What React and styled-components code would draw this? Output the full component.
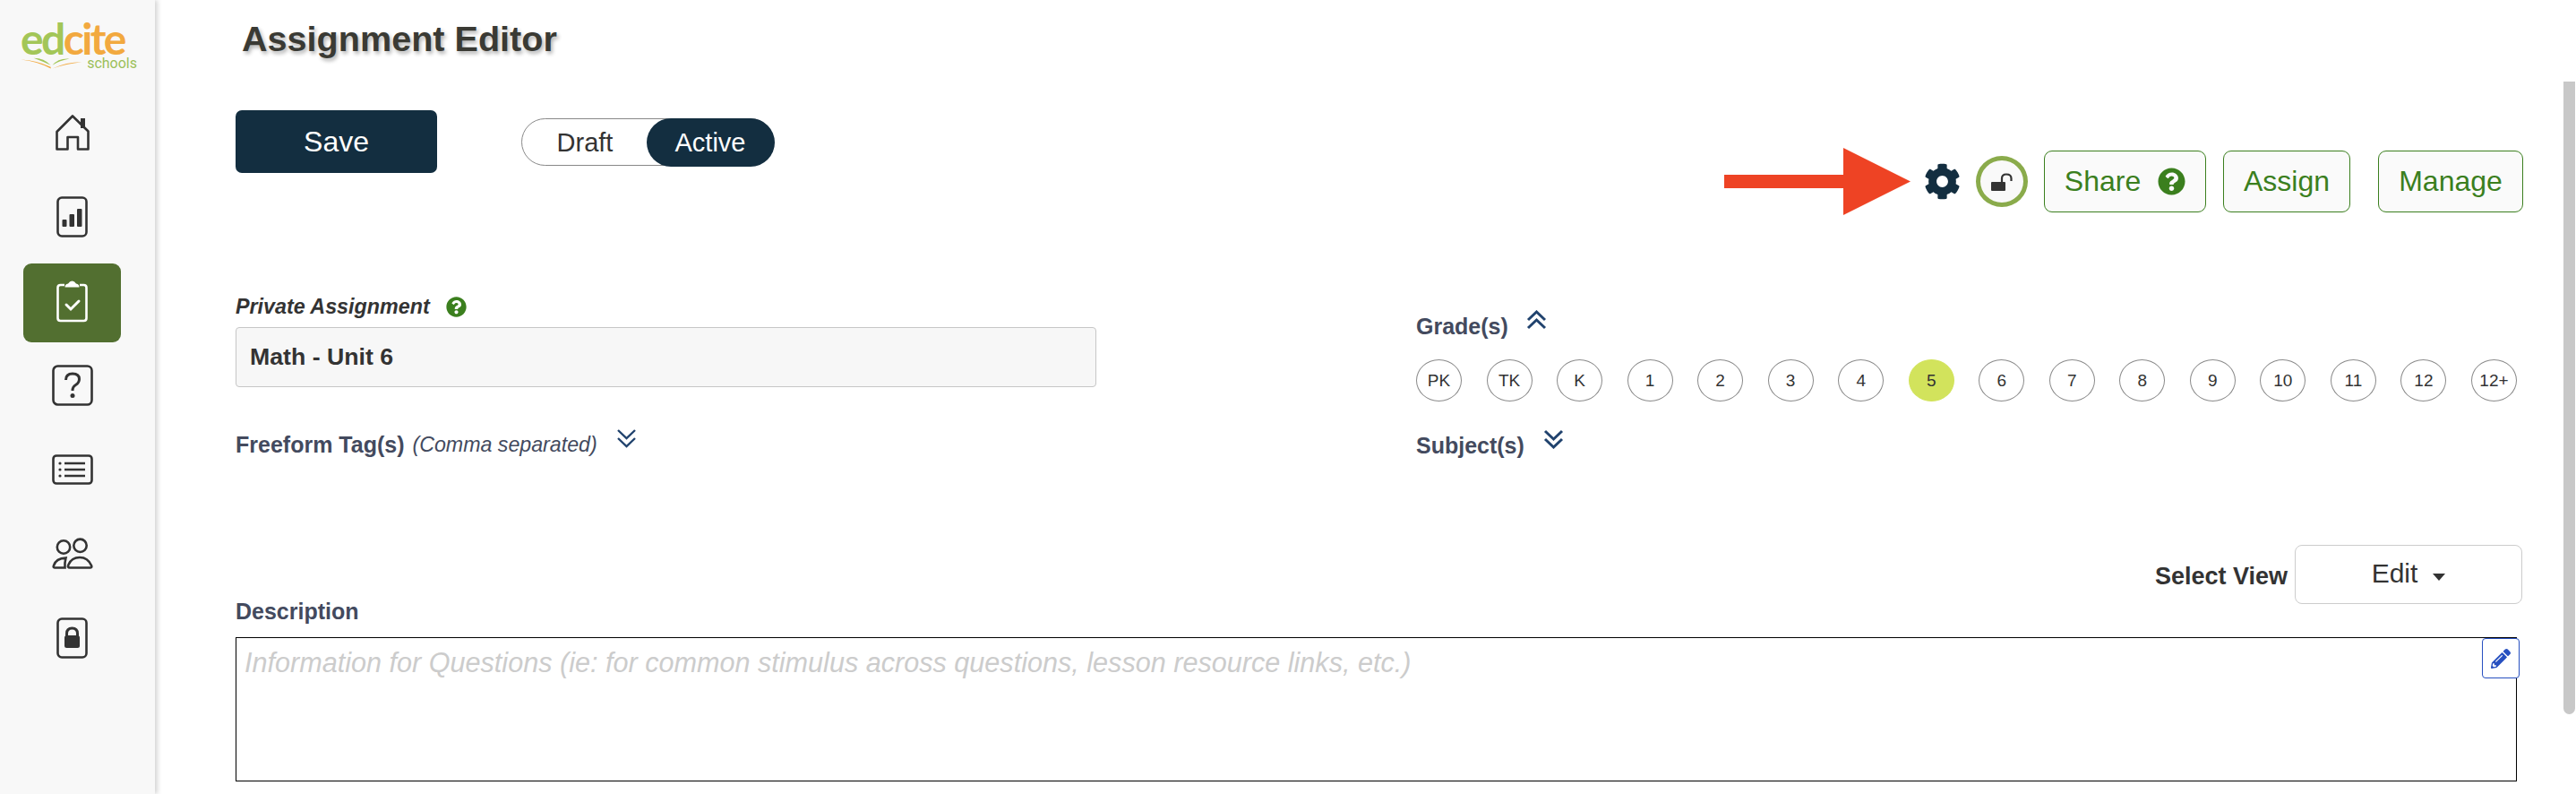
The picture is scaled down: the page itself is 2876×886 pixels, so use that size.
import React from "react";
import styled, { createGlobalStyle } from "styled-components";
import { FaCog, FaQuestionCircle, FaPencilAlt } from "react-icons/fa";

const GlobalStyle = createGlobalStyle`
  html, body {
    margin: 0;
    padding: 0;
    background: #fff;
    font-family: "Liberation Sans", Arial, sans-serif;
  }
`;

const Page = styled.div`
  display: flex;
  width: 2876px;
  height: 886px;
  overflow: hidden;
  background: #fff;
`;

const Sidebar = styled.aside`
  flex: 0 0 173px;
  background: #f8f8f8;
  box-shadow: 3px 0 5px rgba(0, 0, 0, 0.16);
  padding-top: 23px;
  padding-left: 23px;
  box-sizing: border-box;
`;

const Logo = styled.div`
  height: 83px;
  width: 130px;
`;

const LogoWord = styled.div`
  font-family: "Lato", sans-serif;
  font-size: 48px;
  line-height: 40px;
  height: 40px;
  letter-spacing: -2.6px;
  font-weight: 700;
  color: #f2a93f;
  span {
    color: #a3c658;
  }
`;

const LogoFoot = styled.div`
  display: flex;
  align-items: center;
  gap: 5px;
`;

const LogoSchools = styled.span`
  font-family: "Roboto", sans-serif;
  font-size: 16px;
  line-height: 16px;
  color: #9cc05a;
`;

const Nav = styled.nav`
  display: flex;
  flex-direction: column;
  gap: 6px;
  width: 109px;
  margin-left: 3px;
`;

const NavItem = styled.div`
  height: 88px;
  display: flex;
  justify-content: center;
  align-items: center;
  padding-bottom: 4px;
  box-sizing: border-box;
  border-radius: 9px;
  background: ${(p) => (p.$active ? "#526f30" : "transparent")};
  color: ${(p) => (p.$active ? "#fff" : "#333")};
`;

const Main = styled.main`
  flex: 1;
  padding: 20px 45px 0 90px;
  box-sizing: border-box;
`;

const Title = styled.h1`
  margin: 0 0 57px 7px;
  font-size: 39.6px;
  line-height: 46px;
  font-weight: 700;
  color: #3a3a34;
  text-shadow: 2px 3px 4px rgba(0, 0, 0, 0.3);
`;

const Toolbar = styled.div`
  display: flex;
  justify-content: space-between;
  align-items: flex-start;
  height: 114px;
`;

const ToolLeft = styled.div`
  display: flex;
  align-items: flex-start;
  gap: 94px;
`;

const SaveButton = styled.button`
  width: 225px;
  height: 70px;
  border: 0;
  border-radius: 7px;
  background: #132e40;
  color: #fff;
  font: 32px "Liberation Sans", Arial, sans-serif;
`;

const Toggle = styled.div`
  display: flex;
  width: 282px;
  height: 53px;
  margin-top: 9px;
  border: 1.5px solid #888;
  border-radius: 27px;
  box-sizing: border-box;
  font-size: 29px;
`;

const ToggleOption = styled.div`
  flex: 1;
  display: flex;
  justify-content: center;
  align-items: center;
  padding-top: 2px;
  box-sizing: border-box;
  border-radius: 27px;
  margin: -1.5px;
  background: ${(p) => (p.$on ? "#132e40" : "transparent")};
  color: ${(p) => (p.$on ? "#fff" : "#333")};
`;

const ToolRight = styled.div`
  display: flex;
  align-items: center;
  height: 69px;
  margin-top: 45px;
`;

const Arrow = styled.svg`
  width: 208px;
  height: 75px;
  margin-right: 15px;
`;

const Gear = styled(FaCog)`
  width: 41px;
  height: 41px;
  color: #132e40;
  margin-right: 17px;
`;

const LockRing = styled.div`
  width: 58px;
  height: 57px;
  margin-right: 18px;
  border: 5px solid #8aab4b;
  border-radius: 50%;
  box-sizing: border-box;
  background: #f9f9f9;
  display: flex;
  justify-content: center;
  align-items: center;
`;

const ActionButton = styled.div`
  display: flex;
  justify-content: center;
  align-items: center;
  gap: 19px;
  width: ${(p) => p.$w}px;
  height: 69px;
  margin-left: ${(p) => p.$ml || 0}px;
  border: 1.5px solid #3b7f1e;
  border-radius: 9px;
  box-sizing: border-box;
  background: #fafafa;
  color: #3b7f1e;
  font-size: 32px;
`;

const HelpIcon = styled(FaQuestionCircle)`
  width: ${(p) => p.$size}px;
  height: ${(p) => p.$size}px;
  color: #3b7f1e;
`;

const Fields = styled.div`
  display: grid;
  grid-template-columns: 1318px 1229px;
`;

const LeftCol = styled.div`
  padding-top: 91px;
`;

const RightCol = styled.div`
  padding-top: 112px;
`;

const PrivateRow = styled.div`
  display: flex;
  align-items: center;
  gap: 18px;
  margin-bottom: 9px;
`;

const PrivateLabel = styled.label`
  font-size: 23.3px;
  line-height: 28px;
  font-weight: 700;
  font-style: italic;
  color: #333;
`;

const NameInput = styled.div`
  width: 961px;
  height: 67px;
  padding-left: 15px;
  display: flex;
  align-items: center;
  box-sizing: border-box;
  background: #f7f7f7;
  border: 1.5px solid #c6c6c6;
  border-radius: 4px;
  font-size: 26.7px;
  font-weight: 700;
  color: #333;
`;

const FieldLabel = styled.div`
  display: flex;
  align-items: flex-start;
  font-size: 25px;
  line-height: 30px;
  font-weight: 700;
  color: #434a5e;
  margin-top: ${(p) => p.$mt || 0}px;
  em {
    font-weight: 400;
    font-size: 23.2px;
    margin-left: 9px;
  }
`;

const Chevrons = styled.svg`
  width: 23px;
  height: 22px;
  margin-left: ${(p) => p.$ml}px;
  margin-top: -3px;
  color: #21436e;
`;

const GradeRow = styled.div`
  display: flex;
  justify-content: space-between;
  margin-top: 22px;
`;

const Grade = styled.div`
  width: 51px;
  height: 47px;
  display: flex;
  justify-content: center;
  align-items: center;
  box-sizing: border-box;
  border-radius: 50%;
  border: 1.5px solid ${(p) => (p.$on ? "#d2e35c" : "#8a8a8a")};
  background: ${(p) => (p.$on ? "#d2e35c" : "#fff")};
  font-size: 19px;
  color: #333;
`;

const DescriptionRow = styled.div`
  display: flex;
  justify-content: space-between;
  align-items: flex-start;
  height: 89px;
  margin-top: 96px;
  margin-bottom: 14px;
`;

const ViewPicker = styled.div`
  display: flex;
  align-items: flex-start;
  gap: 8px;
  margin-right: 1px;
`;

const ViewLabel = styled.span`
  font-size: 27px;
  line-height: 32px;
  margin-top: 19px;
  font-weight: 700;
  color: #333;
`;

const ViewSelect = styled.div`
  width: 254px;
  height: 66px;
  display: flex;
  justify-content: center;
  align-items: center;
  gap: 17px;
  padding-bottom: 2px;
  box-sizing: border-box;
  border: 1.5px solid #ccc;
  border-radius: 8px;
  font-size: 30px;
  color: #333;
`;

const Caret = styled.i`
  display: block;
  margin-top: 8px;
  border-left: 7px solid transparent;
  border-right: 7px solid transparent;
  border-top: 8px solid #333;
`;

const DescriptionBox = styled.div`
  position: relative;
  width: 2547px;
  height: 161px;
  padding: 8px 9px;
  box-sizing: border-box;
  border: 1.5px solid #000;
  font-size: 30.6px;
  line-height: 38px;
  font-style: italic;
  color: #ccc;
`;

const PencilButton = styled.div`
  position: absolute;
  top: 0;
  right: -4px;
  width: 42px;
  height: 45px;
  display: flex;
  justify-content: center;
  align-items: center;
  box-sizing: border-box;
  background: #fff;
  border: 1.5px solid #2750c0;
  border-radius: 4px;
  color: #2750c0;
`;

const ScrollTrack = styled.div`
  flex: 0 0 14px;
`;

const ScrollThumb = styled.div`
  width: 13px;
  height: 706px;
  margin-top: 91px;
  background: #c8c8c8;
  border-radius: 0 0 7px 7px;
`;

const DoubleChevron = ({ up, ml, w = 3 }) => (
  <Chevrons $ml={ml} viewBox="0 0 23 22" fill="none" stroke="currentColor" strokeWidth={w}>
    {up ? (
      <>
        <path d="M2 11 L11.5 2 L21 11" />
        <path d="M2 20 L11.5 11 L21 20" />
      </>
    ) : (
      <>
        <path d="M2 2 L11.5 11 L21 2" />
        <path d="M2 11 L11.5 20 L21 11" />
      </>
    )}
  </Chevrons>
);

const HomeIcon = () => (
  <svg width="40" height="42" viewBox="0 0 40 42" fill="none" stroke="currentColor" strokeWidth="2.6" strokeLinejoin="round">
    <path d="M2.5 20 L20 2.5 L37.5 19.5 V39.5 H26 V26 H14.5 V39.5 H2.5 Z" />
    <rect x="29" y="5" width="5" height="11" fill="currentColor" stroke="none" />
  </svg>
);

const BarsIcon = () => (
  <svg width="35" height="46" viewBox="0 0 35 46" fill="none" stroke="currentColor" strokeWidth="2.6">
    <rect x="1.5" y="1.5" width="32" height="43" rx="4.5" />
    <rect x="6.5" y="26" width="5" height="8" rx="1" fill="currentColor" stroke="none" />
    <rect x="14.5" y="20" width="5.5" height="14" rx="1" fill="currentColor" stroke="none" />
    <rect x="23" y="14" width="5.5" height="20" rx="1" fill="currentColor" stroke="none" />
  </svg>
);

const ClipboardIcon = () => (
  <svg width="35" height="47" viewBox="0 0 35 47" fill="none" stroke="currentColor" strokeWidth="2.6">
    <path d="M9 5 H4.5 Q1.5 5 1.5 8 V42 Q1.5 45 4.5 45 H30.5 Q33.5 45 33.5 42 V8 Q33.5 5 30.5 5 H26" />
    <path d="M9.5 7.5 Q9.5 4 13 3.5 Q15 0.5 17.5 0.5 Q20 0.5 22 3.5 Q25.5 4 25.5 7.5 Z" fill="currentColor" stroke="none" />
    <path d="M11 27 L16 32 L25 23" strokeWidth="3" strokeLinecap="round" />
  </svg>
);

const QuestionIcon = () => (
  <svg width="46" height="46" viewBox="0 0 46 46" fill="none" stroke="currentColor" strokeWidth="2.6">
    <rect x="1.5" y="1.5" width="43" height="43" rx="5" />
    <path d="M15.5 17 Q15.5 10 23 10 Q30.5 10 30.5 16 Q30.5 20 26.5 22.5 Q23 24.5 23 29" strokeWidth="3" />
    <circle cx="23" cy="34.5" r="2.5" fill="currentColor" stroke="none" />
  </svg>
);

const ListIcon = () => (
  <svg width="46" height="34" viewBox="0 0 46 34" fill="none" stroke="currentColor" strokeWidth="2.6">
    <rect x="1.5" y="1.5" width="43" height="31" rx="3.5" />
    <path d="M14 10 H37 M14 17 H37 M14 24 H37" />
    <circle cx="9" cy="10" r="1.6" fill="currentColor" stroke="none" />
    <circle cx="9" cy="17" r="1.6" fill="currentColor" stroke="none" />
    <circle cx="9" cy="24" r="1.6" fill="currentColor" stroke="none" />
  </svg>
);

const PeopleIcon = () => (
  <svg width="46" height="36" viewBox="0 0 46 36" fill="none" stroke="currentColor" strokeWidth="2.6">
    <circle cx="13" cy="10.5" r="7.2" />
    <circle cx="31.5" cy="8.8" r="7.2" />
    <path d="M14.5 33.5 H3 Q1 33.5 2 31 Q4.5 23 15.5 22.5 Q14 28 14.5 33.5 Z" />
    <path d="M20 33.5 Q17 33.5 18.5 30 Q22 22 31 22 Q40 22 44 31 Q45 33.5 43 33.5 Z" />
  </svg>
);

const LockIcon = () => (
  <svg width="35" height="46" viewBox="0 0 35 46" fill="none" stroke="currentColor" strokeWidth="2.6">
    <rect x="1.5" y="1.5" width="32" height="43" rx="4.5" />
    <path d="M11.5 22 V18 Q11.5 12 17.5 12 Q23.5 12 23.5 18 V22" strokeWidth="3" />
    <rect x="9" y="20" width="17" height="14" rx="2.5" fill="currentColor" stroke="none" />
  </svg>
);

const grades = ["PK", "TK", "K", "1", "2", "3", "4", "5", "6", "7", "8", "9", "10", "11", "12", "12+"];

const navIcons = [HomeIcon, BarsIcon, ClipboardIcon, QuestionIcon, ListIcon, PeopleIcon, LockIcon];

const App = () => {
  return (
    <Page>
      <GlobalStyle />
      <Sidebar>
        <Logo>
          <LogoWord>
            <span>ed</span>cite
          </LogoWord>
          <LogoFoot>
            <svg width="76" height="14" viewBox="0 0 76 14">
              <path d="M0 2 Q20 4 37 13 L37 11 Q20 3 0 2 Z" fill="#f2a93f" />
              <path d="M39 13 Q56 5 75 5 Q56 7 39 13 Z" fill="#f2a93f" />
              <path d="M16 0 Q29 0 37 9 Q27 4 16 0 Z" fill="#a3c658" />
              <path d="M39 9 Q46 0 60 1 Q48 3 39 9 Z" fill="#a3c658" />
            </svg>
            <LogoSchools>schools</LogoSchools>
          </LogoFoot>
        </Logo>
        <Nav>
          {navIcons.map((Icon, i) => (
            <NavItem key={i} $active={i === 2}>
              <Icon />
            </NavItem>
          ))}
        </Nav>
      </Sidebar>
      <Main>
        <Title>Assignment Editor</Title>
        <Toolbar>
          <ToolLeft>
            <SaveButton>Save</SaveButton>
            <Toggle>
              <ToggleOption>Draft</ToggleOption>
              <ToggleOption $on>Active</ToggleOption>
            </Toggle>
          </ToolLeft>
          <ToolRight>
            <Arrow viewBox="0 0 208 75">
              <path d="M0 30 H133 V0 L208 37.5 L133 75 V45 H0 Z" fill="#ee4324" />
            </Arrow>
            <Gear />
            <LockRing>
              <svg width="26" height="20" viewBox="0 0 26 20" fill="none">
                <rect x="1" y="10" width="16" height="10" rx="1" fill="#333" />
                <path d="M13 10 V6 Q13 1.5 18 1.5 Q23.5 1.5 23.5 6 V9" stroke="#333" strokeWidth="2.2" />
              </svg>
            </LockRing>
            <ActionButton $w={181}>
              Share
              <HelpIcon $size={31} />
            </ActionButton>
            <ActionButton $w={142} $ml={19}>
              Assign
            </ActionButton>
            <ActionButton $w={162} $ml={31}>
              Manage
            </ActionButton>
          </ToolRight>
        </Toolbar>
        <Fields>
          <LeftCol>
            <PrivateRow>
              <PrivateLabel>Private Assignment</PrivateLabel>
              <HelpIcon $size={23} />
            </PrivateRow>
            <NameInput>Math - Unit 6</NameInput>
            <FieldLabel $mt={49}>
              Freeform Tag(s) <em>(Comma separated)</em>
              <DoubleChevron ml={21} w={2.4} />
            </FieldLabel>
          </LeftCol>
          <RightCol>
            <FieldLabel>
              Grade(s)
              <DoubleChevron up ml={20} />
            </FieldLabel>
            <GradeRow>
              {grades.map((g) => (
                <Grade key={g} $on={g === "5"}>
                  {g}
                </Grade>
              ))}
            </GradeRow>
            <FieldLabel $mt={34}>
              Subject(s)
              <DoubleChevron ml={21} />
            </FieldLabel>
          </RightCol>
        </Fields>
        <DescriptionRow>
          <FieldLabel $mt={59}>Description</FieldLabel>
          <ViewPicker>
            <ViewLabel>Select View</ViewLabel>
            <ViewSelect>
              Edit
              <Caret />
            </ViewSelect>
          </ViewPicker>
        </DescriptionRow>
        <DescriptionBox>
          Information for Questions (ie: for common stimulus across questions, lesson resource links, etc.)
          <PencilButton>
            <FaPencilAlt size={22} />
          </PencilButton>
        </DescriptionBox>
      </Main>
      <ScrollTrack>
        <ScrollThumb />
      </ScrollTrack>
    </Page>
  );
};

export default App;
